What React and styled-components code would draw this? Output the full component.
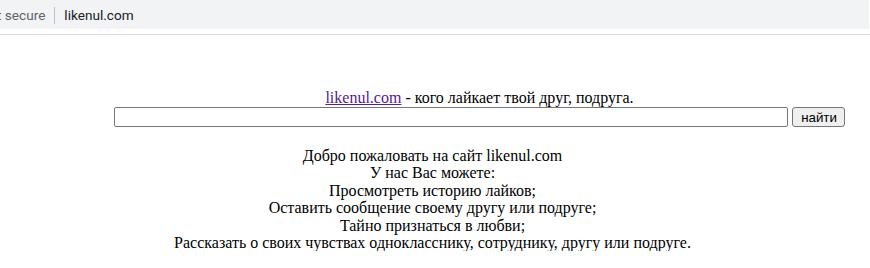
import React from 'react'
import styled, { createGlobalStyle } from 'styled-components'

const GlobalStyle = createGlobalStyle`
  body {
    margin: 0;
    background: #fff;
    font-family: "Liberation Serif", "Times New Roman", serif;
    font-size: 16px;
    color: #000;
  }
`

const Chrome = styled.div`
  height: 28px;
  background: #f1f3f4;
  display: flex;
  align-items: center;
  font-family: Roboto, "Liberation Sans", Arial, sans-serif;
  font-size: 13.6px;
  margin-right: 1px;
  padding-top: 1px;
  overflow: hidden;
`

const Secure = styled.span`
  color: #5f6368;
  margin-left: -3px;
`

const Divider = styled.span`
  width: 1px;
  height: 17px;
  background: #bdc1c6;
  margin: 0 9px 0 9px;
`

const Domain = styled.span`
  color: #202124;
`

const ChromeEdge = styled.div`
  height: 5px;
  border-bottom: 1px solid #dadce0;
`

const Page = styled.div`
  padding-top: 54px;
`

const Header = styled.div`
  margin-left: 114px;
  width: 731px;
  text-align: center;
  line-height: 18px;
`

const SiteLink = styled.a`
  color: #551a8b;
  text-decoration: underline;
`

const SearchRow = styled.form`
  display: flex;
  gap: 4px;
  margin: 0;
`

const SearchInput = styled.input`
  width: 675px;
  height: 20px;
  box-sizing: border-box;
  border: 1px solid #767676;
  border-radius: 2px;
  padding: 0 2px;
  margin: 0;
  font-size: 13.33px;
`

const SearchButton = styled.button`
  width: 53px;
  height: 20px;
  box-sizing: border-box;
  border: 1px solid #767676;
  border-radius: 3px;
  background: #efefef;
  font-family: "Liberation Sans", Arial, sans-serif;
  font-size: 13.33px;
  color: #000;
  padding: 0 0 0 1px;
  margin: 0;
`

const Welcome = styled.div`
  margin-top: 20px;
  text-align: center;
  line-height: 17.4px;
  padding-right: 5px;
`

const lines = [
  'Добро пожаловать на сайт likenul.com',
  'У нас Вас можете:',
  'Просмотреть историю лайков;',
  'Оставить сообщение своему другу или подруге;',
  'Тайно признаться в любви;',
  'Рассказать о своих чувствах однокласснику, сотруднику, другу или подруге.',
]

const App = () => (
  <>
    <GlobalStyle />
    <Chrome>
      <Secure>t secure</Secure>
      <Divider />
      <Domain>likenul.com</Domain>
    </Chrome>
    <ChromeEdge />
    <Page>
      <Header>
        <SiteLink href="#">likenul.com</SiteLink> - кого лайкает твой друг, подруга.
        <SearchRow onSubmit={e => e.preventDefault()}>
          <SearchInput type="text" />
          <SearchButton type="submit">найти</SearchButton>
        </SearchRow>
      </Header>
      <Welcome>
        {lines.map(l => (
          <div key={l}>{l}</div>
        ))}
      </Welcome>
    </Page>
  </>
)

export default App
